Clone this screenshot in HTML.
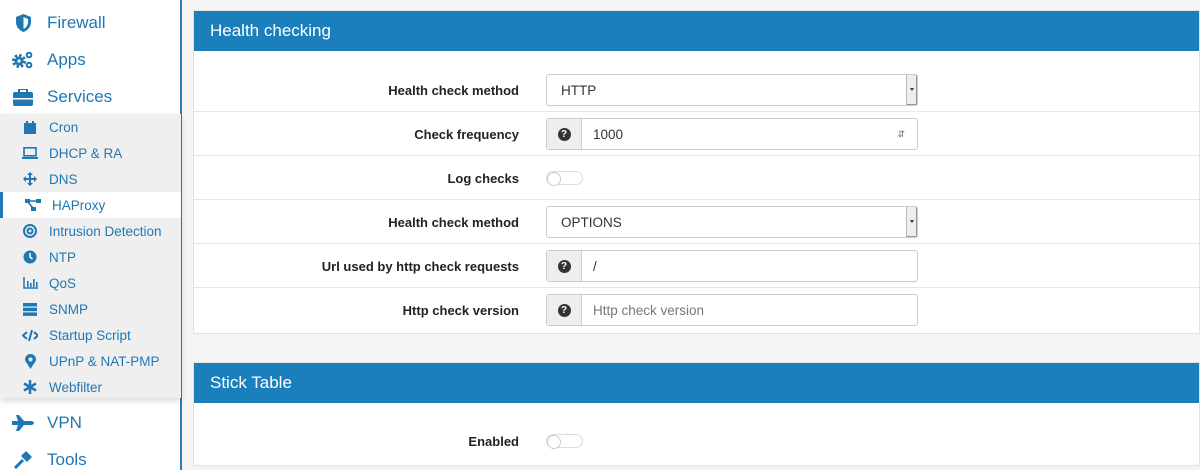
<!DOCTYPE html>
<html><head><style>
*{box-sizing:border-box;margin:0;padding:0}
body{width:1200px;height:470px;overflow:hidden;background:#f4f4f4;font-family:"Liberation Sans",Arial,sans-serif;position:relative}
.side{position:absolute;left:0;top:0;width:182px;height:470px;background:#fff;border-right:2px solid #2a7fb8}
.top{position:absolute;left:12px;font-size:17px;color:#1f78b4;display:flex;align-items:center}
.top .ic{width:22px;height:20px;margin-right:13px;display:flex;align-items:center;justify-content:center}
.sub{position:absolute;left:0;top:114px;width:181px;height:284px;background:#efefef;box-shadow:0 3px 6px rgba(0,0,0,.15)}
.si{position:absolute;left:0;width:181px;height:26px;font-size:13.5px;color:#1f78b4;display:flex;align-items:center;padding-left:22px}
.si .ic{width:16px;height:14px;margin-right:11px;display:flex;align-items:center;justify-content:center}
.si.act{background:#fff;border-left:3px solid #1f78b4;padding-left:22px}
.panel{position:absolute;left:193px;right:0;background:#fff;border:1px solid #e2e2e2}
.ph{height:40px;background:#1a7fbb;color:#fff;font-size:17px;padding:10px 16px}
.row{position:absolute;left:0;right:0;height:44px;border-bottom:1px solid #e6e6e6}
.lab{position:absolute;right:680px;width:300px;text-align:right;top:15px;font-size:13px;font-weight:bold;color:#222}
.inp{position:absolute;left:352px;width:372px;top:6px;height:32px;border:1px solid #ccc;border-radius:3px;background:#fff;font-size:13.5px;color:#333;display:flex;align-items:center}
.addon{width:35px;height:30px;background:#eee;border-right:1px solid #ccc;display:flex;align-items:center;justify-content:center}
.q{width:13px;height:13px;border-radius:50%;background:#333;color:#fff;font-size:10px;font-weight:bold;text-align:center;line-height:13px}
.caret{position:absolute;right:0;top:0;width:11px;height:30px;border-left:1px solid #bbb;background:#eee;box-shadow:inset -1px -1px 0 #999}
.caret:after{content:"";position:absolute;left:3px;top:13px;border:2.5px solid transparent;border-top:3px solid #333}
.tog{position:absolute;left:352px;top:15px;width:37px;height:14px;border:1px solid #ddd;border-radius:8px;background:#fff}
.tog:before{content:"";position:absolute;left:0;top:0;width:12px;height:12px;border-radius:50%;border:1px solid #ccc;background:#fff}
</style></head><body>
<div class="side">
 <div class="top" style="top:13px"><span class="ic"><svg width="15" height="18" viewBox="0 0 15 18"><path d="M7.5 0L15 3v5c0 5-3.5 8.5-7.5 10C3.5 16.5 0 13 0 8V3z" fill="#1f78b4"/><path d="M7.5 3v12C10 14 12 11 12 8V5z" fill="#fff"/></svg></span>Firewall</div>
 <div class="top" style="top:50px"><span class="ic"><svg width="22" height="18" viewBox="0 0 22 18"><circle cx="7" cy="10" r="5.5" fill="none" stroke="#1f78b4" stroke-width="3" stroke-dasharray="2.5 1.8"/><circle cx="7" cy="10" r="4.5" fill="#1f78b4"/><circle cx="7" cy="10" r="1.6" fill="#fff"/><circle cx="17" cy="4" r="2.3" fill="none" stroke="#1f78b4" stroke-width="2"/><circle cx="17" cy="14" r="2.3" fill="none" stroke="#1f78b4" stroke-width="2"/></svg></span>Apps</div>
 <div class="top" style="top:87px"><span class="ic"><svg width="20" height="17" viewBox="0 0 20 17"><rect x="6" y="0" width="8" height="4" fill="none" stroke="#1f78b4" stroke-width="2"/><rect x="0" y="3" width="20" height="14" rx="2" fill="#1f78b4"/><rect x="0" y="9" width="20" height="1.5" fill="#fff"/></svg></span>Services</div>
 <div class="sub">
  <div class="si" style="top:0"><span class="ic"><svg width="12" height="13"><rect y="2" width="12" height="11" fill="#1f78b4"/><rect x="2" width="2" height="3" fill="#1f78b4"/><rect x="8" width="2" height="3" fill="#1f78b4"/></svg></span>Cron</div>
  <div class="si" style="top:26px"><span class="ic"><svg width="16" height="12"><rect x="2" y="0.8" width="12" height="8" fill="none" stroke="#1f78b4" stroke-width="1.6"/><rect y="10" width="16" height="2" fill="#1f78b4"/></svg></span>DHCP &amp; RA</div>
  <div class="si" style="top:52px"><span class="ic"><svg width="14" height="14"><path d="M7 0l3 3H8v3h3V4l3 3-3 3V8H8v3h2l-3 3-3-3h2V8H3v2L0 7l3-3v2h3V3H4z" fill="#1f78b4"/></svg></span>DNS</div>
  <div class="si act" style="top:78px"><span class="ic"><svg width="16" height="12"><rect width="5" height="4" fill="#1f78b4"/><rect x="11" width="5" height="4" fill="#1f78b4"/><rect x="6" y="8" width="5" height="4" fill="#1f78b4"/><path d="M3 3l5 6M5 2h6" stroke="#1f78b4" stroke-width="1.5"/></svg></span>HAProxy</div>
  <div class="si" style="top:104px"><span class="ic"><svg width="14" height="14"><circle cx="7" cy="7" r="6" fill="none" stroke="#1f78b4" stroke-width="2"/><circle cx="7" cy="7" r="2.5" fill="none" stroke="#1f78b4" stroke-width="2"/></svg></span>Intrusion Detection</div>
  <div class="si" style="top:130px"><span class="ic"><svg width="14" height="14"><circle cx="7" cy="7" r="6.5" fill="#1f78b4"/><path d="M7 3v4l2.5 2" stroke="#fff" stroke-width="1.5" fill="none"/></svg></span>NTP</div>
  <div class="si" style="top:156px"><span class="ic"><svg width="15" height="12"><path d="M1 0v11h14" stroke="#1f78b4" stroke-width="1.5" fill="none"/><rect x="4" y="4" width="1.6" height="6" fill="#1f78b4"/><rect x="7" y="6" width="1.6" height="4" fill="#1f78b4"/><rect x="10" y="2" width="1.6" height="8" fill="#1f78b4"/><rect x="13" y="5" width="1.6" height="5" fill="#1f78b4"/></svg></span>QoS</div>
  <div class="si" style="top:182px"><span class="ic"><svg width="14" height="13"><rect width="14" height="3.5" fill="#1f78b4"/><rect y="4.7" width="14" height="3.5" fill="#1f78b4"/><rect y="9.4" width="14" height="3.5" fill="#1f78b4"/></svg></span>SNMP</div>
  <div class="si" style="top:208px"><span class="ic"><svg width="17" height="13"><path d="M5 3L1 6.5 5 10M12 3l4 3.5-4 3.5M10 1L7 12" stroke="#1f78b4" stroke-width="2" fill="none"/></svg></span>Startup Script</div>
  <div class="si" style="top:234px"><span class="ic"><svg width="11" height="15"><path d="M5.5 15C2 9 0 7.5 0 5.5a5.5 5.5 0 0111 0c0 2-2 3.5-5.5 9.5z" fill="#1f78b4"/><circle cx="5.5" cy="5.5" r="2" fill="#efefef"/></svg></span>UPnP &amp; NAT-PMP</div>
  <div class="si" style="top:260px"><span class="ic"><svg width="14" height="14"><path d="M7 0v14M1 3.5l12 7M13 3.5l-12 7" stroke="#1f78b4" stroke-width="2.5"/></svg></span>Webfilter</div>
 </div>
 <div class="top" style="top:413px"><span class="ic"><svg width="22" height="16"><path d="M0 6h6L4 0h3l5 6h6c3 0 4 1 4 2s-1 2-4 2h-6l-5 6H4l2-6H0z" fill="#1f78b4"/></svg></span>VPN</div>
 <div class="top" style="top:450px"><span class="ic"><svg width="18" height="18"><path d="M1 17l8-8" stroke="#1f78b4" stroke-width="3"/><path d="M7 5l5-5 6 6-5 5z" fill="#1f78b4"/></svg></span>Tools</div>
</div>

<div class="panel" style="top:10px;height:324px">
 <div class="ph">Health checking</div>
 <div class="row" style="top:57px"><div class="lab">Health check method</div><div class="inp" style="padding-left:14px">HTTP<span class="caret"></span></div></div>
 <div class="row" style="top:101px"><div class="lab">Check frequency</div><div class="inp"><span class="addon"><span class="q">?</span></span><span style="padding-left:11px">1000</span><span style="position:absolute;right:12px;font-size:9px;color:#666">&#8693;</span></div></div>
 <div class="row" style="top:145px"><div class="lab">Log checks</div><span class="tog"></span></div>
 <div class="row" style="top:189px"><div class="lab">Health check method</div><div class="inp" style="padding-left:14px">OPTIONS<span class="caret"></span></div></div>
 <div class="row" style="top:233px"><div class="lab">Url used by http check requests</div><div class="inp"><span class="addon"><span class="q">?</span></span><span style="padding-left:11px">/</span></div></div>
 <div class="row" style="top:277px;border:0"><div class="lab">Http check version</div><div class="inp"><span class="addon"><span class="q">?</span></span><span style="padding-left:11px;color:#777">Http check version</span></div></div>
</div>

<div class="panel" style="top:362px;height:104px">
 <div class="ph">Stick Table</div>
 <div class="row" style="top:57px;border:0"><div class="lab" style="top:14px">Enabled</div><span class="tog" style="top:14px"></span></div>
</div>
</body></html>
